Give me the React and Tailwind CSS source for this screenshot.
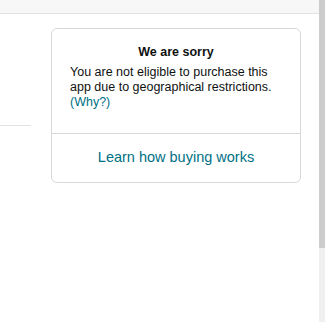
export default function App() {
  return (
    <div className="relative w-[325px] h-[322px] bg-white overflow-hidden" style={{ fontFamily: '"Liberation Sans", Arial, sans-serif' }}>
      <div className="h-[14px] bg-[#f7f7f7] border-b border-[#e3e3e3] mr-[6px]" />
      <div className="flex mr-[6px]">
        <div className="w-[31px] pt-[111px] shrink-0">
          <div className="h-px bg-[#e3e3e3]" />
        </div>
        <div className="w-[20px] shrink-0" />
        <div className="mt-[14px] w-[250px] h-[155px] border border-[#d5d9d9] rounded-[6px] flex flex-col">
          <div className="h-[105px] border-b border-[#d5d9d9] px-[18px] pt-[13px]">
            <div className="text-center text-[12.5px] font-bold text-[#0f1111] leading-[20px]">We are sorry</div>
            <div className="text-[12.5px] text-[#0f1111] leading-[15px] mt-[3px] whitespace-nowrap">
              You are not eligible to purchase this<br />app due to geographical restrictions.<br /><span className="text-[#007185]">(Why?)</span>
            </div>
          </div>
          <div className="flex-1 flex items-center justify-center text-[14.5px] text-[#007185]">Learn how buying works</div>
        </div>
      </div>
      <div className="absolute right-0 top-0 w-[6px] h-full bg-[#f0f0f0]">
        <div className="h-[248px] bg-[#cdcdcd]" />
      </div>
    </div>
  );
}
